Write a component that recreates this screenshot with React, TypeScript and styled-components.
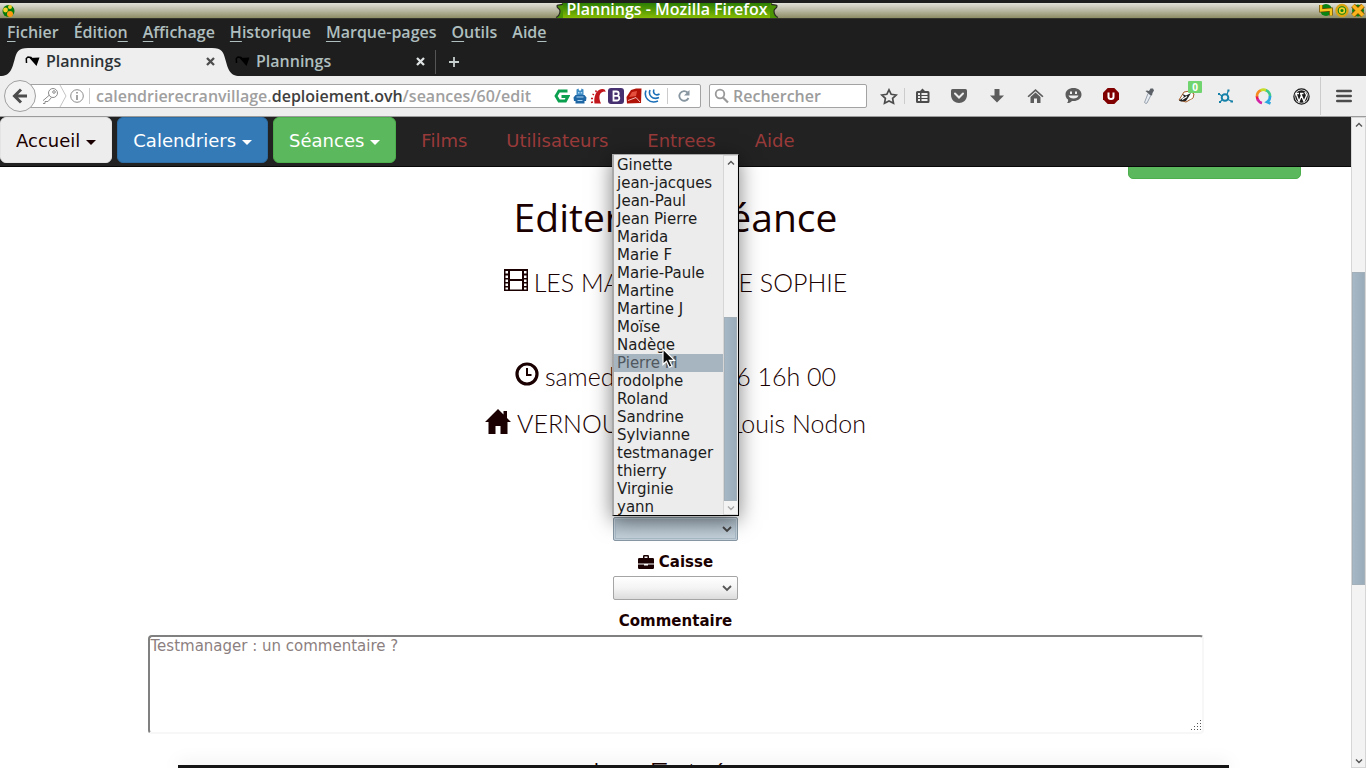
import React from "react";
import styled, { createGlobalStyle, css } from "styled-components";

const chromeFont = '"Open Sans", "Noto Sans", sans-serif';
const pageFont = '"DejaVu Sans", sans-serif';
const titleFont = 'Lato, "Open Sans", sans-serif';
const ink = "#1a0000";

const GlobalStyle = createGlobalStyle`
  *, *::before, *::after { box-sizing: border-box; }
  body { margin: 0; background: #1e1e1e; }
  button, input, select, textarea { font: inherit; color: inherit; margin: 0; }
  button { background: none; border: 0; padding: 0; cursor: pointer; }
  a { text-decoration: none; color: inherit; }
  svg { display: block; flex: none; }
`;

const Window = styled.div`
  display: flex;
  flex-direction: column;
  height: 100vh;
  overflow: hidden;
  font-family: ${chromeFont};
  font-size: 16px;
  font-weight: 600;
`;

/* ---------- window chrome ---------- */

const TitleBar = styled.header`
  display: flex;
  align-items: center;
  justify-content: space-between;
  height: 19px;
  padding: 0 1px 0 2px;
  flex: none;
  border-top: 3px solid #1e1e1e;
  border-bottom: 1px solid #33332c;
  background: linear-gradient(#e2e1d9, #b9b8a2 50%, #8d8d65);
`;

const TitlePlate = styled.div`
  display: flex;
  height: 15px;
`;

const Title = styled.h1`
  margin: 0 -1px;
  padding: 0 3px;
  color: #fff;
  background: linear-gradient(#2b7d05, #85bb04);
  font-size: 16px;
  font-weight: 600;
  line-height: 13px;
  white-space: nowrap;
`;

const WindowButtons = styled.div`
  display: flex;
  gap: 2px;
`;

const MenuBar = styled.nav`
  display: flex;
  flex: none;
  gap: 15px;
  height: 28px;
  padding: 0 7px 3px;
  align-items: center;
  color: #afbebe;
  background: #1e1e1e;
  u { text-underline-offset: 3px; text-decoration-thickness: 1px; }
`;

const TabStrip = styled.div`
  display: flex;
  flex: none;
  align-items: stretch;
  height: 29px;
  padding: 1px 0 0 15px;
  background: #1e1e1e;
`;

const Tab = styled.div<{ $active?: boolean }>`
  position: relative;
  display: flex;
  align-items: center;
  width: 210px;
  padding: 0 10px 2px;
  color: ${(p) => (p.$active ? "#2c3236" : "#afbebe")};
`;

const TabShape = styled.div`
  position: absolute;
  inset: 0 -15px;
  display: flex;
  span { flex: 1; background: #eee; }
`;

const TabLabel = styled.button`
  position: relative;
  display: flex;
  flex: 1;
  gap: 6px;
  align-items: center;
  line-height: 20px;
`;

const TabClose = styled.button`
  position: relative;
`;

const NewTab = styled.button`
  display: flex;
  align-items: center;
  margin: 2px 0;
  padding: 0 13px;
  border-left: 1px solid #555;
`;

const Toolbar = styled.div`
  display: flex;
  flex: none;
  align-items: center;
  height: 41px;
  padding-left: 4px;
  color: #4c4c4c;
  background: #eee;
  border-bottom: 1px solid #9b9b9b;
`;

const BackButton = styled.button`
  position: relative;
  display: flex;
  align-items: center;
  justify-content: center;
  width: 32px;
  height: 32px;
  margin-right: -7px;
  border: 1px solid #a0a0a0;
  border-radius: 50%;
  background: #f3f3f3;
`;

const fieldBox = css`
  display: flex;
  align-items: center;
  height: 24px;
  border: 1px solid #a3a3a3;
  border-radius: 2px;
  background: #fff;
`;

const AddressBar = styled.div`
  ${fieldBox}
  flex: 1;
  min-width: 0;
  padding: 0 8px 0 13px;
`;

const Address = styled.div`
  flex: 1;
  min-width: 0;
  margin: 0 20px 0 6px;
  overflow: hidden;
  white-space: nowrap;
  color: #a0a0a0;
  line-height: 22px;
  strong { color: #404040; font-weight: inherit; }
`;

const SecurityIcons = styled.div`
  display: flex;
  align-items: center;
  padding-right: 5px;
`;

const AddonRow = styled.div`
  display: flex;
  gap: 2px;
  margin-right: 7px;
`;

const Divider = styled.span<{ $tall?: boolean }>`
  flex: none;
  width: 1px;
  height: ${(p) => (p.$tall ? 38 : 16)}px;
  background: #ccc;
`;

const ReloadButton = styled.button`
  margin-left: 8px;
`;

const SearchBox = styled.label`
  ${fieldBox}
  flex: none;
  width: 158px;
  margin: 0 7px 0 8px;
  padding-left: 4px;
  gap: 4px;
`;

const SearchInput = styled.input`
  flex: 1;
  min-width: 0;
  padding: 0;
  border: 0;
  outline: 0;
  background: none;
  &::placeholder { color: #9c9c9c; opacity: 1; }
`;

const ToolButton = styled.button<{ $width?: number }>`
  position: relative;
  display: flex;
  align-items: center;
  justify-content: center;
  flex: none;
  width: ${(p) => p.$width ?? 38}px;
  height: 28px;
`;

const Badge = styled.span`
  position: absolute;
  top: -1px;
  right: 4px;
  width: 14px;
  border-radius: 1px;
  background: #71d56f;
  color: #fff;
  font: 700 10px/12px ${chromeFont};
  text-align: center;
`;

/* ---------- page ---------- */

const Browser = styled.div`
  display: flex;
  flex: 1;
  min-height: 0;
  background: #fff;
  color: ${ink};
  font-family: ${pageFont};
  font-weight: 400;
`;

const Page = styled.div`
  display: flex;
  flex: 1;
  flex-direction: column;
  min-width: 0;
`;

const NavBar = styled.nav`
  display: flex;
  flex: none;
  align-items: flex-start;
  gap: 5px;
  height: 50px;
  background: #222;
  border-bottom: 1px solid #080808;
  font-size: 18px;
  line-height: 24px;
`;

const NavButton = styled.button<{ $fill: string; $edge: string; $text: string }>`
  display: flex;
  align-items: center;
  gap: 6px;
  height: 46px;
  padding: 2px 15px 0;
  border: 1px solid ${(p) => p.$edge};
  border-radius: 6px;
  background: ${(p) => p.$fill};
  color: ${(p) => p.$text};
  &::after {
    content: "";
    margin-top: 3px;
    border: 5px solid transparent;
    border-top-color: currentColor;
    border-bottom: 0;
  }
`;

const NavLinks = styled.div`
  display: flex;
  gap: 39px;
  padding: 12px 20px;
  color: #993a3a;
`;

const Main = styled.main`
  display: flex;
  flex: 1;
  flex-direction: column;
  align-items: center;
  min-height: 0;
`;

const ActionRow = styled.div`
  display: flex;
  flex: none;
  align-items: flex-end;
  justify-content: flex-end;
  width: 100%;
  height: 12px;
  padding-right: 50px;
  overflow: hidden;
`;

const ActionButton = styled.button`
  width: 173px;
  height: 34px;
  flex: none;
  border: 1px solid #4cae4c;
  border-radius: 5px;
  background: #5cb85c;
`;

const Heading = styled.h2`
  flex: none;
  margin: 18px 0 31px;
  font: 500 39px/40px "Open Sans", sans-serif;
`;

const Details = styled.div`
  display: flex;
  flex: none;
  flex-direction: column;
  align-items: center;
  gap: 19px;
  margin-bottom: 80px;
`;

const Detail = styled.p<{ $spaced?: boolean }>`
  display: flex;
  align-items: center;
  gap: 6px;
  height: 28px;
  margin: 0 0 ${(p) => (p.$spaced ? 47 : 0)}px;
  font: 300 25px/28px ${titleFont};
  white-space: nowrap;
  svg { margin-bottom: 4px; }
`;

const Field = styled.div`
  position: relative;
  display: flex;
  flex: none;
  width: 125px;
  margin-bottom: 10px;
`;

const SelectBox = styled.select<{ $open?: boolean }>`
  appearance: none;
  width: 100%;
  height: 24px;
  padding: 0 24px 0 6px;
  border: 1px solid ${(p) => (p.$open ? "#8797a3" : "#a5a5a5")};
  border-radius: 2px;
  outline: 0;
  background: ${(p) => (p.$open ? "linear-gradient(#a9b8c4, #c6d3dd)" : "linear-gradient(#fff, #f4f4f4 50%, #dcdcdc)")};
  box-shadow: ${(p) => (p.$open ? "inset 0 0 0 1px #c3d0da, inset 0 0 0 2px #a9bac7" : "none")};
`;

const SelectArrow = styled.svg`
  position: absolute;
  top: 9px;
  right: 6px;
  pointer-events: none;
`;

const Popup = styled.div`
  position: absolute;
  left: -1px;
  bottom: 25px;
  z-index: 5;
  display: flex;
  width: 127px;
  height: 362px;
  border: 1px solid #000;
  border-top-color: #a8a8a8;
  border-left: 2px solid #a8a8a8;
  background: #ececec;
  box-shadow: 0 4px 20px rgba(0, 0, 0, 0.5);
`;

const OptionList = styled.ul`
  flex: 1;
  margin: 0;
  padding: 1px 0 0;
  list-style: none;
  font: 400 15px/18px ${pageFont};
  overflow: hidden;
`;

const Option = styled.li<{ $current?: boolean }>`
  padding-left: 3px;
  white-space: nowrap;
  color: ${(p) => (p.$current ? "#50585f" : "#1c1c1c")};
  background: ${(p) => (p.$current ? "#a7b5c1" : "none")};
`;

const Pointer = styled.svg`
  position: absolute;
  left: 48px;
  top: 193px;
`;

const Label = styled.label`
  display: flex;
  flex: none;
  align-items: center;
  gap: 5px;
  height: 22px;
  margin-bottom: 3px;
  font-size: 15px;
  font-weight: 700;
`;

const Comment = styled.textarea`
  flex: none;
  width: calc(100% - 295px);
  height: 99px;
  padding: 0 1px;
  border: 2px solid #f7f7f7;
  border-top-color: #808080;
  border-left-color: #808080;
  border-radius: 4px;
  outline: 0;
  resize: none;
  background: #fff;
  font: 400 15px/18px ${pageFont};
  &::placeholder { color: #8c7f7f; opacity: 1; }
`;

const CommentBox = styled.div`
  position: relative;
  display: flex;
  justify-content: center;
  flex: none;
  width: 100%;
`;

const Grip = styled.svg`
  position: absolute;
  right: 149px;
  bottom: 3px;
`;

const Subheading = styled.h2`
  flex: none;
  margin: 20px 0 0;
  font: 300 34px/40px ${titleFont};
`;

const BottomPanel = styled.footer`
  position: relative;
  flex: none;
  height: 3px;
  margin: 0 122px 0 178px;
  background: #151515;
  box-shadow: 0 0 18px rgba(0, 0, 0, 0.22);
`;

/* ---------- scroll bars ---------- */

const ScrollBar = styled.div<{ $slim?: boolean }>`
  display: flex;
  flex: none;
  flex-direction: column;
  width: 15px;
  border: 1px solid #d6d6d6;
  border-right-color: ${(p) => (p.$slim ? "#ececec" : "#d6d6d6")};
  background: #f3f3f3;
`;

const ScrollArrow = styled.button<{ $dim?: boolean }>`
  display: flex;
  align-items: center;
  justify-content: center;
  height: 13px;
  color: ${(p) => (p.$dim ? "#aaa" : "#555")};
`;

const ScrollSpace = styled.span<{ $share: number }>`
  flex: ${(p) => p.$share} 0 0;
`;

const ScrollThumb = styled.span<{ $share: number }>`
  flex: ${(p) => p.$share} 0 0;
  border: 1px solid #a3afb9;
  background: linear-gradient(to right, #a6b7c5, #9aabba);
`;

/* ---------- drawings ---------- */

const Chevron = ({ up }: { up?: boolean }) => (
  <svg width="8" height="6" viewBox="0 0 8 6" fill="none" stroke="currentColor" strokeWidth="1.4">
    <path d={up ? "M1 4.5 4 1.5 7 4.5" : "M1 1.5 4 4.5 7 1.5"} />
  </svg>
);

const Favicon = () => (
  <svg width="15" height="12" viewBox="0 0 15 12">
    <path d="M4.500 3 14.500 2.500 11.500 11Z" fill="#000" />
    <path d="M1.500 8 1.300 3.500 3 2 6 2.500 8 5" fill="none" stroke="#000" strokeWidth="1.500" />
  </svg>
);

const Cross = ({ color }: { color: string }) => (
  <svg width="9" height="9" viewBox="0 0 9 9" stroke={color} strokeWidth="2.300">
    <path d="M1 1 8 8M8 1 1 8" />
  </svg>
);

const Orb = () => (
  <svg width="13" height="14" viewBox="0 0 13 14">
    <circle cx="6.500" cy="7" r="6" fill="#067a08" />
    <circle cx="3.500" cy="6" r="2.400" fill="#f4d32a" />
    <circle cx="8" cy="3" r="2" fill="#f1ce2a" />
    <circle cx="8" cy="10" r="3" fill="#fb9914" />
  </svg>
);

const PlateEnd = ({ flip }: { flip?: boolean }) => (
  <svg width="9" height="15" viewBox="0 0 9 15">
    <g transform={flip ? "translate(9 0) scale(-1 1)" : undefined}>
      <path d="M9 0H7C7 3 2 1 2 3 2 6 5 5 5 8 5 11 4 13 1 15H9Z" fill="#4b9404" />
      <path d="M8 1C6 2.500 2 1 2 3 2 6 5 5 5 8 5 11 4 13 1 14.500" fill="none" stroke="#2b2b25" strokeWidth="1.200" />
    </g>
  </svg>
);

const FilmIcon = () => (
  <svg width="24" height="22" viewBox="0 0 24 22">
    <path fill={ink} fillRule="evenodd" d="M0 0H24V22H0ZM1.500 2V4.500H4V2ZM1.500 6.500V9H4V6.500ZM1.500 10.500V13H4V10.500ZM1.500 14.500V17H4V14.500ZM1.500 18.500V20.500H4V18.500ZM20 2V4.500H22.500V2ZM20 6.500V9H22.500V6.500ZM20 10.500V13H22.500V10.500ZM20 14.500V17H22.500V14.500ZM20 18.500V20.500H22.500V18.500ZM6 2V10H18V2ZM6 12V20.500H18V12Z" />
  </svg>
);

const ClockIcon = () => (
  <svg width="24" height="24" viewBox="0 0 24 24" fill="none" stroke={ink}>
    <circle cx="12" cy="12" r="10" strokeWidth="3.200" />
    <path d="M12 6V13H16.500" strokeWidth="2" />
  </svg>
);

const HouseIcon = () => (
  <svg width="26" height="25" viewBox="0 0 26 25" fill={ink}>
    <path d="M13 0 18.500 5.500V2H22V9L26 13H22.500V25H15.500V17H10.500V25H3.500V13H0Z" />
  </svg>
);

const BriefcaseIcon = () => (
  <svg width="16" height="14" viewBox="0 0 16 14" fill={ink}>
    <path fillRule="evenodd" d="M5 3V1.200Q5 0 6.200 0H9.800Q11 0 11 1.200V3H14.800Q16 3 16 4.200V8.500H0V4.200Q0 3 1.200 3ZM6.500 1.500V3H9.500V1.500Z" />
    <path d="M0 9.500H6V10.500H10V9.500H16V12.800Q16 14 14.800 14H1.200Q0 14 0 12.800Z" />
  </svg>
);

const addons = [
  <svg key="g" width="16" height="16" viewBox="0 0 16 16" fill="none" stroke="#0ba04f" strokeWidth="2.800">
    <path d="M13.500 3H5L2 8 5 13H11.500L14 8.500H7.500" />
  </svg>,
  <svg key="robot" width="16" height="16" viewBox="0 0 16 16">
    <path d="M4.500 1.500 6.500 .5 7 2.500H9L9.500 .5 11.500 1.500V7H4.500Z" fill="#3c8ac4" />
    <path d="M3.500 7H12.500L14.500 9.500 14 13H12.500V15.500H3.500V13H2L1.500 9.500Z" fill="#1f66a5" />
    <path d="M6 4H7.500V5.500H6ZM8.700 4H10.200V5.500H8.700ZM4.500 8.500H11.500V9.500H4.500ZM5.500 12H10.500V13H5.500Z" fill="#a9d4f3" />
  </svg>,
  <svg key="rails" width="16" height="16" viewBox="0 0 16 16">
    <path d="M4.500 15.500C3.500 9 6 1.500 12 1 14.500 .8 15.500 2 15.500 4L14 3.500C9.500 4 8 9 11 15.500Z" fill="#c0161c" />
    <path d="M1 14.500 3 14M1 10.500 3 10.500M2.500 6 4 6.800M5.500 2.500 6.500 4" stroke="#c0161c" strokeWidth="1.400" />
  </svg>,
  <svg key="boot" width="16" height="16" viewBox="0 0 16 16">
    <rect width="16" height="16" rx="3" fill="#46306f" />
    <path d="M5.500 3.500H8.500A2.200 2.200 0 0 1 8.500 7.900H5.500ZM5.500 7.900H9A2.300 2.300 0 0 1 9 12.500H5.500Z" fill="none" stroke="#fff" strokeWidth="1.800" />
  </svg>,
  <svg key="ruby" width="16" height="16" viewBox="0 0 16 16">
    <path d="M5 2 10 .5 15.500 .5 15 15 1 15.500 .5 9Z" fill="#b11208" />
    <path d="M3 9 6 4 11 3 10 8Z" fill="#e4503e" />
    <path d="M2 12.500 10 9.500 14 14" fill="none" stroke="#f2c0ba" strokeWidth="1" />
  </svg>,
  <svg key="jq" width="16" height="16" viewBox="0 0 16 16" fill="none" stroke="#1b6fb8" strokeWidth="1.600">
    <path d="M2 2.500C-.5 9 5 16.500 14 13M6 2C4 7 8.500 12.500 15 9.500M10 1.500C8.500 5 11.500 8.500 15.500 6" />
  </svg>,
];

const g = "#4c4c4c";
const tools: { label: string; art: React.ReactNode; width?: number }[] = [
  {
    label: "Marque-pages",
    width: 35,
    art: (
      <svg width="16" height="16" viewBox="0 0 16 16">
        <path d="M5 3 7.500 .5 10 3H13Q14.500 3 14.500 4.500V13.500Q14.500 15 13 15H2.500Q1 15 1 13.500V4.500Q1 3 2.500 3Z" fill={g} />
        <path d="M3 6H5M6.500 6H12.500M3 9H5M6.500 9H12.500M3 12H5M6.500 12H12.500" stroke="#eee" strokeWidth="2" />
      </svg>
    ),
  },
  {
    label: "Pocket",
    art: (
      <svg width="16" height="14" viewBox="0 0 16 14">
        <path d="M1.500 0H14.500Q16 0 16 1.500V6C16 11 12 14 8 14S0 11 0 6V1.500Q0 0 1.500 0Z" fill="#5c5c5c" />
        <path d="M4 4.500 8 8.500 12 4.500" fill="none" stroke="#eee" strokeWidth="2" strokeLinecap="round" />
      </svg>
    ),
  },
  {
    label: "Téléchargements",
    art: (
      <svg width="16" height="16" viewBox="0 0 16 16" fill="#5c5c5c">
        <path d="M5.500 1H10.500V7.500H15L8 14.500 1 7.500H5.500Z" />
      </svg>
    ),
  },
  {
    label: "Accueil du navigateur",
    art: (
      <svg width="17" height="16" viewBox="0 0 17 16" fill="#5c5c5c">
        <path d="M8.500 1 16.500 8.300 15.300 9.300 8.500 3.200 1.700 9.300.5 8.300Z" />
        <path d="M3.500 9 8.500 4.500 13.500 9V15H10V10.500H7V15H3.500Z" />
      </svg>
    ),
  },
  {
    label: "Discussion",
    art: (
      <svg width="17" height="16" viewBox="0 0 17 16">
        <path d="M8.500 0C13 0 16.500 2.500 16.500 6.500S13 13 8.500 13L7 12.900C5.500 14.500 4 15 2 15 3 14 3.300 13 3 11.500 1.500 10.500.5 9 .5 6.500 .5 2.500 4 0 8.500 0Z" fill="#5c5c5c" />
        <path d="M5 3.500H7V6H5ZM10 3.500H12V6H10ZM3.500 7.500H13.500C13 9.500 11 10.500 8.500 10.500S4 9.500 3.500 7.500Z" fill="#eee" />
      </svg>
    ),
  },
  {
    label: "Bloqueur",
    art: (
      <svg width="16" height="16" viewBox="0 0 16 16">
        <path d="M4.700 0H11.300L16 4.700V11.300L11.300 16H4.700L0 11.300V4.700Z" fill="#800000" />
        <path d="M5.500 4.500V9Q5.500 11 8 11T10.500 9V4.500" fill="none" stroke="#fff" strokeWidth="2" />
      </svg>
    ),
  },
  {
    label: "Pipette",
    art: (
      <svg width="16" height="17" viewBox="0 0 16 17">
        <path d="M7 5.500 3.500 14.500 5 15.500 6 15 10 7" fill="#e8edf4" stroke="#98a1ad" />
        <path d="M4.500 3 6 2.500 8 3 9.500 .5 12 .5 13 2.500 11.500 5 11 7.500 9 7Z" fill="#5b6166" />
      </svg>
    ),
  },
  {
    label: "Confidentialité",
    art: (
      <svg width="18" height="16" viewBox="0 0 18 16">
        <path d="M1 12 6 4 12 3 16 6 15 10 8 14Z" fill="#fff" stroke="#a25a26" />
        <path d="M1 12.500 6 9 4.500 6 8 7.500 13 5 10 10 8 13 3 13.500Z" fill="#222" />
        <path d="M4 11.500 9 8.500M12 11 14.500 8.500" stroke="#fff" strokeWidth="1.200" />
      </svg>
    ),
  },
  {
    label: "Réseau",
    art: (
      <svg width="17" height="16" viewBox="0 0 17 16" fill="none" stroke="#1580a8">
        <circle cx="8" cy="9.500" r="3.300" strokeWidth="2" />
        <path d="M10 6.500 11.500 2M5 12 3 14M11 11.500 15 13.500M5 8 2 6" strokeWidth="1.200" />
        <path d="M10.500 2.500H12.500M13.500 13.500H16M1 6H3M2 14H4" strokeWidth="2" />
      </svg>
    ),
  },
  {
    label: "Qwant",
    art: (
      <svg width="17" height="17" viewBox="0 0 17 17" fill="none" strokeWidth="2.600">
        <path d="M3 12A6.500 6.500 0 0 1 2 8" stroke="#e8164f" />
        <path d="M2 8.500A6.500 6.500 0 0 1 6 2.200" stroke="#f58a1f" />
        <path d="M5.500 2.400A6.500 6.500 0 0 1 11.500 2.500" stroke="#c8dc28" />
        <path d="M11 2.300A6.500 6.500 0 0 1 15 8.500" stroke="#3cc98a" />
        <path d="M15 8A6.500 6.500 0 0 1 12 14L15.500 15.500" stroke="#2aa5e0" />
        <path d="M2.500 11A6.500 6.500 0 0 0 7 15" stroke="#d322a6" />
      </svg>
    ),
  },
  {
    label: "WordPress",
    art: (
      <svg width="17" height="17" viewBox="0 0 17 17">
        <circle cx="8.500" cy="8.500" r="7.600" fill="#fff" stroke="#1b1b1b" strokeWidth="1.300" />
        <circle cx="8.500" cy="8.500" r="6.300" fill="#1b1b1b" />
        <path d="M3 5.500 6 13.500 8.500 7.500 11 13.500 13.500 7.500C13.700 6 12 5.500 12 4M2.500 5.500H6M7 5.500H10.500M7.500 5.500 8.500 8" fill="none" stroke="#fff" strokeWidth="1.300" />
      </svg>
    ),
  },
];

const menus: [string, string, string][] = [
  ["", "F", "ichier"],
  ["Éditio", "n", ""],
  ["", "A", "ffichage"],
  ["", "H", "istorique"],
  ["", "M", "arque-pages"],
  ["", "O", "utils"],
  ["Aid", "e", ""],
];

const people = [
  "Ginette", "jean-jacques", "Jean-Paul", "Jean Pierre", "Marida", "Marie F", "Marie-Paule",
  "Martine", "Martine J", "Moïse", "Nadège", "Pierre M", "rodolphe", "Roland", "Sandrine",
  "Sylvianne", "testmanager", "thierry", "Virginie", "yann",
];

export default function App() {
  return (
    <Window>
      <GlobalStyle />
      <TitleBar>
        <Orb />
        <TitlePlate>
          <PlateEnd />
          <Title>Plannings - Mozilla Firefox</Title>
          <PlateEnd flip />
        </TitlePlate>
        <WindowButtons>
          <button aria-label="Réduire">
            <svg width="14" height="15" viewBox="0 0 14 15">
              <circle cx="7" cy="7" r="6" fill="#0a8412" />
              <path d="M2 2V7.500L12 6.500V12.500" fill="none" stroke="#6b4c00" strokeWidth="3.800" />
              <path d="M2 2V7.500L12 6.500V12.500" fill="none" stroke="#f5c51e" strokeWidth="2.400" />
            </svg>
          </button>
          <button aria-label="Agrandir">
            <svg width="14" height="15" viewBox="0 0 14 15">
              <circle cx="7" cy="7.500" r="5.500" fill="#0a8412" stroke="#d9a514" strokeWidth="2.400" />
              <circle cx="7" cy="7.500" r="2.400" fill="#0a8412" stroke="#f5d02a" strokeWidth="1.600" />
            </svg>
          </button>
          <button aria-label="Fermer">
            <svg width="14" height="15" viewBox="0 0 14 15">
              <circle cx="7" cy="7.500" r="6" fill="#0a8412" />
              <path d="M2 2.500 12 12.500M12 2.500 2 12.500" stroke="#7a4a00" strokeWidth="5" />
              <path d="M2 2.500 12 12.500M12 2.500 2 12.500" stroke="#fbb41c" strokeWidth="3.600" />
            </svg>
          </button>
        </WindowButtons>
      </TitleBar>

      <MenuBar>
        {menus.map(([before, key, after]) => (
          <button key={before + key + after}>
            {before}
            <u>{key}</u>
            {after}
          </button>
        ))}
      </MenuBar>

      <TabStrip>
        <Tab $active>
          <TabShape>
            <svg width="28" height="28" viewBox="0 0 28 28">
              <path d="M0 28C11 28 12 20 14.500 12 16.500 4 18 0 28 0V28Z" fill="#eee" />
            </svg>
            <span />
            <svg width="28" height="28" viewBox="0 0 28 28">
              <path d="M28 28C17 28 16 20 13.500 12 11.500 4 10 0 0 0V28Z" fill="#eee" />
            </svg>
          </TabShape>
          <TabLabel>
            <Favicon />
            Plannings
          </TabLabel>
          <TabClose aria-label="Fermer l'onglet">
            <Cross color="#4c4c4c" />
          </TabClose>
        </Tab>
        <Tab>
          <TabLabel>
            <Favicon />
            Plannings
          </TabLabel>
          <TabClose aria-label="Fermer l'onglet">
            <Cross color="#dfe3e3" />
          </TabClose>
        </Tab>
        <NewTab aria-label="Nouvel onglet">
          <svg width="10" height="10" viewBox="0 0 10 10" stroke="#c8cfcf" strokeWidth="1.800">
            <path d="M5 0V10M0 5H10" />
          </svg>
        </NewTab>
      </TabStrip>

      <Toolbar>
        <BackButton aria-label="Précédent">
          <svg width="16" height="16" viewBox="0 0 16 16" fill="none" stroke={g} strokeWidth="3">
            <path d="M9 1.500 2.500 8 9 14.500M3 8H15" />
          </svg>
        </BackButton>
        <AddressBar>
          <SecurityIcons>
            <svg width="26" height="22" viewBox="0 0 26 22" fill="none" stroke="#8c8c8c">
              <circle cx="10" cy="8" r="4.500" />
              <circle cx="11" cy="7" r="1.300" />
              <path d="M6.500 10 -1 16.500V18.500H2V16.500H5L8.500 12.500" />
              <path d="M17 0 23 11 17 22" stroke="#c4c4c4" />
            </svg>
            <svg width="15" height="16" viewBox="0 0 15 16" fill="none" stroke="#8c8c8c">
              <circle cx="8" cy="8" r="6.300" />
              <path d="M8 7V12M8 4V5.600" strokeWidth="1.600" />
            </svg>
          </SecurityIcons>
          <Divider />
          <Address>
            calendrierecranvillage.<strong>deploiement.ovh</strong>/seances/60/edit
          </Address>
          <AddonRow>{addons}</AddonRow>
          <Divider />
          <ReloadButton aria-label="Actualiser">
            <svg width="16" height="16" viewBox="0 0 16 16">
              <path d="M11.500 4.500A4.800 4.800 0 1 0 12.500 10" fill="none" stroke="#8796a0" strokeWidth="1.800" />
              <path d="M13.500 2V7.500H8Z" fill="#8796a0" />
            </svg>
          </ReloadButton>
        </AddressBar>
        <SearchBox>
          <svg width="15" height="16" viewBox="0 0 15 16" fill="none" stroke="#999">
            <circle cx="6" cy="6" r="4.300" strokeWidth="1.800" />
            <path d="M9 9.500 14 14.500" strokeWidth="2.200" />
          </svg>
          <SearchInput aria-label="Rechercher" placeholder="Rechercher" />
        </SearchBox>
        <ToolButton $width={30} aria-label="Marquer cette page">
          <svg width="18" height="17" viewBox="0 0 18 17" fill="none" stroke={g} strokeWidth="1.700">
            <path d="M9 1.800 11.200 6.300 16.200 7 12.600 10.400 13.500 15.300 9 13 4.500 15.300 5.400 10.400 1.800 7 6.800 6.300Z" />
          </svg>
        </ToolButton>
        <Divider />
        {tools.map((t) => (
          <ToolButton key={t.label} $width={t.width} aria-label={t.label}>
            {t.art}
            {t.label === "Confidentialité" && <Badge>0</Badge>}
          </ToolButton>
        ))}
        <Divider $tall />
        <ToolButton $width={45} aria-label="Menu">
          <svg width="16" height="14" viewBox="0 0 16 14" stroke={g} strokeWidth="2.400" strokeLinecap="round">
            <path d="M1.200 2H14.800M1.200 7H14.800M1.200 12H14.800" />
          </svg>
        </ToolButton>
      </Toolbar>

      <Browser>
        <Page>
          <NavBar>
            <NavButton $fill="#ededed" $edge="#e4e4e4" $text={ink}>Accueil</NavButton>
            <NavButton $fill="#337ab7" $edge="#2e6da4" $text="#fff">Calendriers</NavButton>
            <NavButton $fill="#5cb85c" $edge="#4cae4c" $text="#fff">Séances</NavButton>
            <NavLinks>
              <a href="#films">Films</a>
              <a href="#utilisateurs">Utilisateurs</a>
              <a href="#entrees">Entrees</a>
              <a href="#aide">Aide</a>
            </NavLinks>
          </NavBar>
          <Main>
            <ActionRow>
              <ActionButton aria-label="Nouvelle séance" />
            </ActionRow>
            <Heading>Editer une séance</Heading>
            <Details>
              <Detail $spaced>
                <FilmIcon />
                LES MALHEURS DE SOPHIE
              </Detail>
              <Detail>
                <ClockIcon />
                samedi 7 mai 2016 16h 00
              </Detail>
              <Detail>
                <HouseIcon />
                VERNOUX, Espace Louis Nodon
              </Detail>
            </Details>
            <Field>
              <SelectBox $open aria-label="Projection" defaultValue="">
                <option value="" />
              </SelectBox>
              <SelectArrow width="10" height="7" viewBox="0 0 10 7" fill="none" stroke="#444" strokeWidth="1.800">
                <path d="M1 1 5 5 9 1" />
              </SelectArrow>
              <Popup>
                <OptionList role="listbox" aria-label="Projection">
                  {people.map((name) => (
                    <Option key={name} role="option" aria-selected={name === "Pierre M"} $current={name === "Pierre M"}>
                      {name}
                    </Option>
                  ))}
                </OptionList>
                <ScrollBar $slim>
                  <ScrollArrow aria-label="Monter"><Chevron up /></ScrollArrow>
                  <ScrollSpace $share={150} />
                  <ScrollThumb $share={184} />
                  <ScrollArrow $dim aria-label="Descendre"><Chevron /></ScrollArrow>
                </ScrollBar>
                <Pointer width="14" height="21" viewBox="0 0 14 21">
                  <path d="M1 1V16.500L4.500 13.200 7.300 19.300 10 18 7.300 12.300H12.500Z" fill="#0a0a0a" stroke="#fff" strokeWidth="1.200" />
                </Pointer>
              </Popup>
            </Field>
            <Label htmlFor="caisse">
              <BriefcaseIcon />
              Caisse
            </Label>
            <Field>
              <SelectBox id="caisse" defaultValue="">
                <option value="" />
              </SelectBox>
              <SelectArrow width="10" height="7" viewBox="0 0 10 7" fill="none" stroke="#555" strokeWidth="1.800">
                <path d="M1 1 5 5 9 1" />
              </SelectArrow>
            </Field>
            <Label htmlFor="commentaire">Commentaire</Label>
            <CommentBox>
              <Comment id="commentaire" placeholder="Testmanager : un commentaire ?" />
              <Grip width="12" height="12" viewBox="0 0 12 12" fill="#555">
                <path d="M10 1h1v1h-1zM7 4h1v1h-1zM10 4h1v1h-1zM4 7h1v1h-1zM7 7h1v1h-1zM10 7h1v1h-1zM1 10h1v1h-1zM4 10h1v1h-1zM7 10h1v1h-1zM10 10h1v1h-1z" />
              </Grip>
            </CommentBox>
            <Subheading>Les Entrées</Subheading>
          </Main>
          <BottomPanel />
        </Page>
        <ScrollBar>
          <ScrollArrow aria-label="Défiler vers le haut"><Chevron up /></ScrollArrow>
          <ScrollSpace $share={141} />
          <ScrollThumb $share={312} />
          <ScrollSpace $share={170} />
          <ScrollArrow aria-label="Défiler vers le bas"><Chevron /></ScrollArrow>
        </ScrollBar>
      </Browser>
    </Window>
  );
}
